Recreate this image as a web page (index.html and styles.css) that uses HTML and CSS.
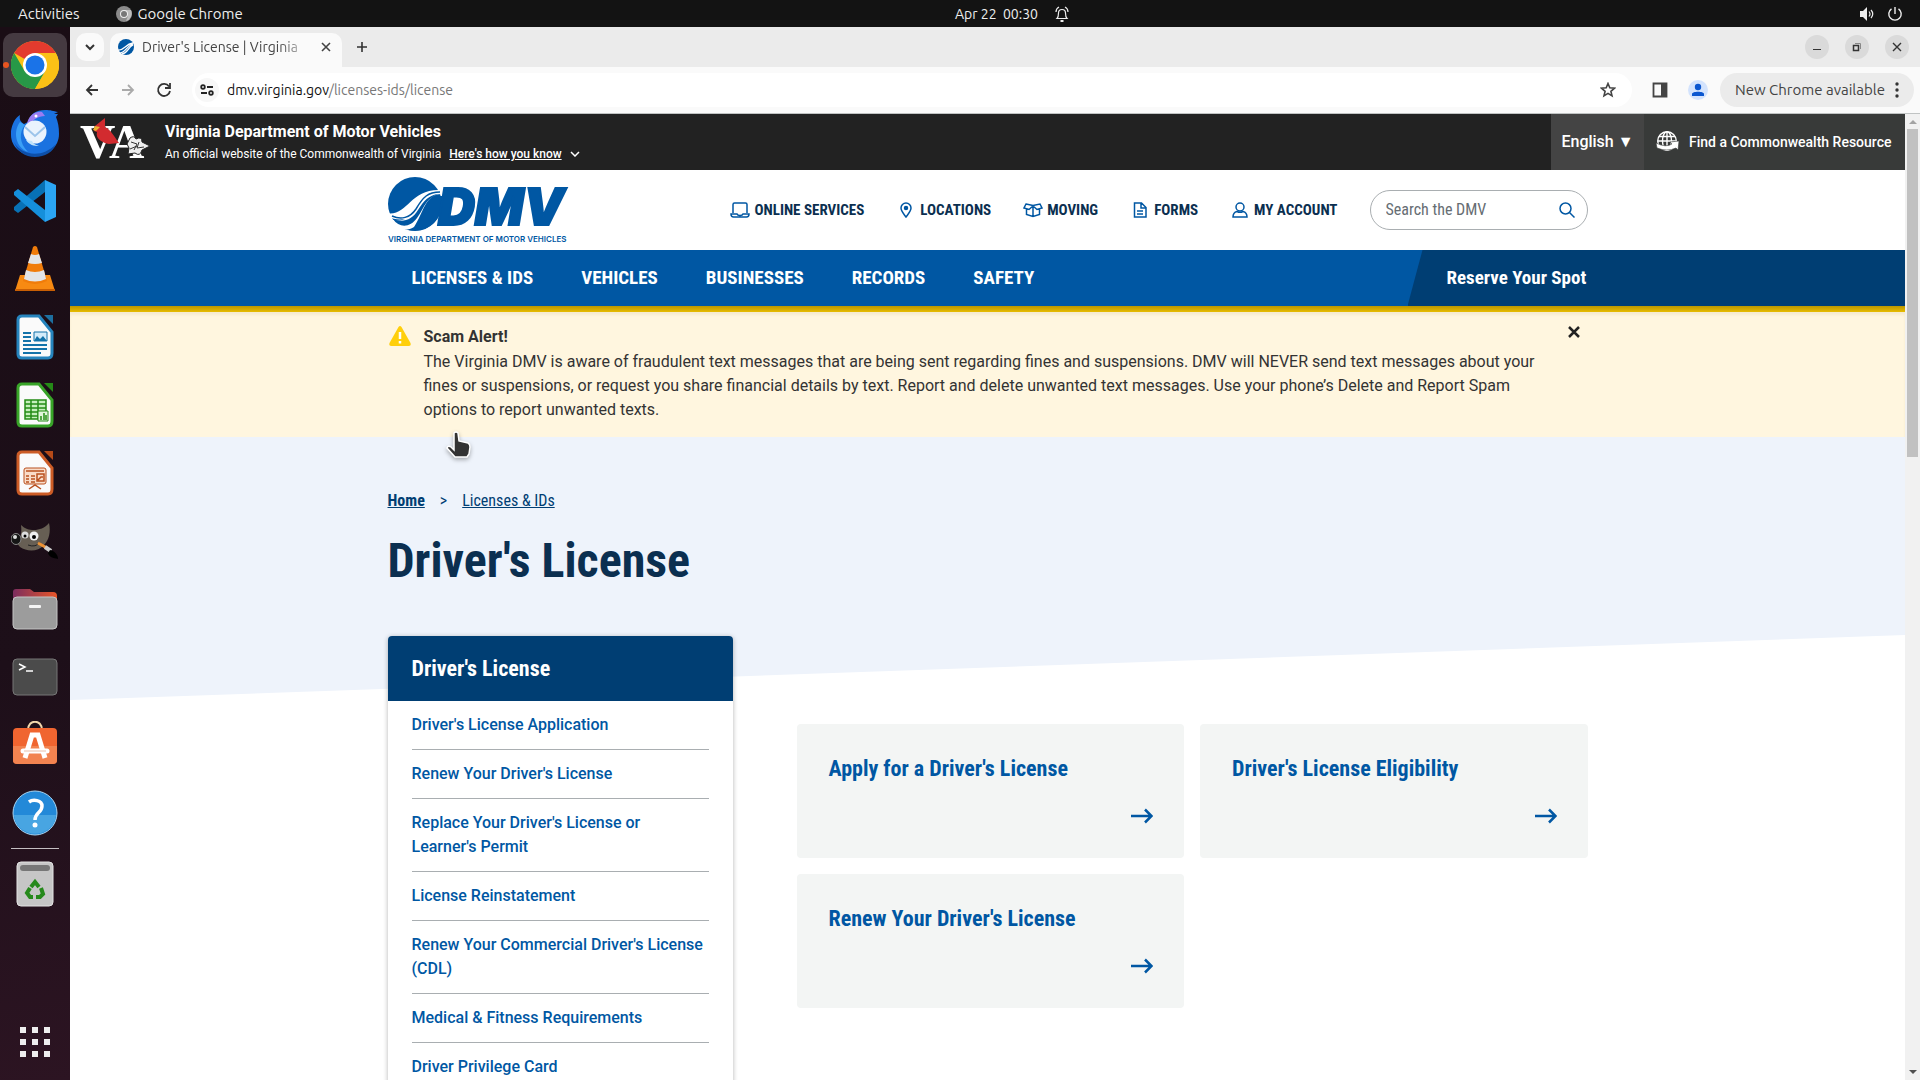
FILE: index.html
```html
<!DOCTYPE html>
<html lang="en">
<head>
<meta charset="utf-8">
<title>Driver's License | Virginia Department of Motor Vehicles</title>
<link rel="stylesheet" href="styles.css">
</head>
<body>
<div class="topbar">
  <div class="topbar-left">
    <button class="plain">Activities</button>
    <button class="plain app-menu">
      <svg width="16" height="16" viewBox="0 0 16 16"><circle cx="8" cy="8" r="8" fill="#8b8b8b"/><path d="M8 4h7a8 8 0 0 1-5 11l2-5z" fill="#bdbdbd"/><circle cx="8" cy="8" r="4" fill="#eee"/><circle cx="8" cy="8" r="3" fill="#777"/></svg>
      Google Chrome
    </button>
  </div>
  <button class="plain clock">Apr 22&nbsp; 00:30
    <svg width="14" height="16" viewBox="0 0 14 16" fill="none" stroke="#eee" stroke-width="1.2"><path d="M2 12.5c1.500-1.500 1.500-3 1.500-5.500a3.500 3.500 0 0 1 7 0c0 2.500 0 4 1.500 5.500z"/><path d="M1 6c0-2 1-4 3-5M13 6c0-2-1-4-3-5"/><path d="M5.500 15h3" stroke-width="2"/></svg>
  </button>
  <div class="topbar-right">
    <svg width="16" height="16" viewBox="0 0 16 16"><path d="M1 5h3l4-4v14l-4-4H1z" fill="#eee"/><path d="M10 5.500q2 2.500 0 5M12 4q3.500 4 0 8" stroke="#eee" fill="none" stroke-width="1.200"/></svg>
    <svg width="16" height="16" viewBox="0 0 16 16" fill="none" stroke="#eee" stroke-width="1.400"><path d="M8 1v7M4.500 2.800a6.200 6.200 0 1 0 7 0"/></svg>
  </div>
</div>

<div class="desktop">
  <nav class="dock" aria-label="Dock">
    <button class="dock-item active" aria-label="Google Chrome"><svg width="48" height="48" viewBox="0 0 48 48"><circle cx="24" cy="24" r="24" fill="#fbc116"/><path d="M24 24 3.200 12A24 24 0 0 1 44.800 12z" fill="#e33b2e"/><path d="M3.200 12 13.600 30 24 36 24 48A24 24 0 0 1 3.200 12z" fill="#279847"/><path d="M13.600 30 24 36 34.400 30 24 48A24 24 0 0 1 12 44.800z" fill="#279847"/><path d="M34.400 30 24 48A24 24 0 0 0 44.800 12H24z" fill="#fbc116"/><circle cx="24" cy="24" r="12" fill="#fff"/><circle cx="24" cy="24" r="9.500" fill="#1a73e8"/></svg></button>
    <button class="dock-item" aria-label="Thunderbird"><svg width="48" height="48" viewBox="0 0 48 48"><path d="M0 22C1 15 4 9 9 6c-1 5 1 7 4 9L17 13C19 5 25 1 34 1c6 0 8 1 13 2l-4 2h4l-2 3c2 5 3 10 3 17 0 13-11 22-24 22S0 38 0 26z" fill="#1a72e0"/><path d="M16 14C19 5 25 2 31 3l3 4c-7 0-12 4-15 8z" fill="#9a7cf2"/><path d="M9 13c-7 9-5 25 8 30-9-9-9-20-3-27z" fill="#3aa0f6"/><path d="M3 33c6 12 27 18 42 2-3 8-11 13-21 13S6 42 3 33z" fill="#0e4fa8"/><circle cx="24" cy="23" r="11.500" fill="#eaf3fd"/><path d="m14 18 10 9 10-9" fill="none" stroke="#9cc4ea" stroke-width="2"/><path d="M15 31c3 5 8 6 13 6-3-1-6-2-7-5z" fill="#bfe3fb"/><circle cx="25" cy="7" r="1.500" fill="#fff"/></svg></button>
    <button class="dock-item" aria-label="Visual Studio Code"><svg width="44" height="44" viewBox="0 0 44 44"><path d="m1 31 4 3 27-21V1L1 28z" fill="#0871b5"/><path d="m1 13 4-3 27 21v12L1 16z" fill="#158fdb"/><path d="m32 1 11 5v32l-11 5z" fill="#2ba5f3"/></svg></button>
    <button class="dock-item" aria-label="VLC"><svg width="42" height="48" viewBox="0 0 42 48"><path d="M6 30h30l5 16H1z" fill="#f78a12"/><path d="M1 44h40v2H1z" fill="#c95f04"/><path d="M19 2q2-2 4 0l10 34q-12 6-24 0z" fill="#f07c0a"/><path d="m17 9-3 9q7 2 14 0l-3-9q-4 2-8 0zM12 25l-2 9q11 5 22 0l-2-9q-9 4-18 0z" fill="#e3e5e7"/></svg></button>
    <button class="dock-item" aria-label="LibreOffice Writer"><svg width="38" height="46" viewBox="0 0 38 46"><path d="M6 2h17l13 16v21q0 5-4 5H6q-4 0-4-4V6q0-4 4-4z" fill="#fafafa" stroke="#2684bd" stroke-width="3"/><path d="M28 1h9v9z" fill="#1d6f9f"/><path d="M7 19h8M7 23h8M7 27h8M7 31h24M7 35h24M7 39h18" stroke="#1473aa" stroke-width="2"/><path d="M18 18h13v9H18z" fill="#d5ecfa" stroke="#1473aa"/><path d="m18 27 3-5 3 3 3-3 4 5z" fill="#1473aa"/></svg></button>
    <button class="dock-item" aria-label="LibreOffice Calc"><svg width="38" height="46" viewBox="0 0 38 46"><path d="M6 2h17l13 16v21q0 5-4 5H6q-4 0-4-4V6q0-4 4-4z" fill="#fafafa" stroke="#38a428" stroke-width="3"/><path d="M28 1h9v9z" fill="#258a17"/><path d="M9 18h21v19H9zM9 22h21M9 26h21M9 30h21M9 34h21M15 18v19M22 18v19" fill="#c5efbc" stroke="#248c16" stroke-width="1.500"/><path d="M22 29h10v10H22z" fill="#e0f5db" stroke="#248c16"/><path d="M25 38v-4M28 38v-7M30 38v-5" stroke="#248c16" stroke-width="1.500"/></svg></button>
    <button class="dock-item" aria-label="LibreOffice Impress"><svg width="38" height="46" viewBox="0 0 38 46"><path d="M6 2h17l13 16v21q0 5-4 5H6q-4 0-4-4V6q0-4 4-4z" fill="#fafafa" stroke="#cc5c26" stroke-width="3"/><path d="M28 1h9v9z" fill="#b54a18"/><rect x="8" y="18" width="22" height="16" rx="2" fill="#f9dcc8" stroke="#b9501e"/><path d="M10 21h18M10 26h3m2 0h4M10 29h3m2 0h4M10 32h3m2 0h4" stroke="#b9501e" stroke-width="1.500"/><path d="M21 24h7v7h-7zM22 30l3-3 2 0M13 39l6-4 6 4" fill="none" stroke="#b9501e" stroke-width="1.500"/></svg></button>
    <button class="dock-item" aria-label="GIMP"><svg width="48" height="40" viewBox="0 0 48 40"><path d="M10 4c4 4 8 5 13 5s11-2 15-7c2 9 0 17-5 22-6 7-17 7-24 2L4 20c6 0 7-8 6-16z" fill="#675f54"/><circle cx="14" cy="14" r="3.500" fill="#ddd"/><circle cx="23" cy="15" r="4.500" fill="#eee"/><circle cx="14" cy="15" r="1.500"/><circle cx="23" cy="16" r="2"/><ellipse cx="5" cy="18" rx="5" ry="5.500" fill="#151515" stroke="#888"/><ellipse cx="4" cy="16" rx="2" ry="2" fill="#ddd"/><path d="M17 24q8 3 12-3" fill="none" stroke="#222"/><path d="m27 22 9 5" stroke="#ed9234" stroke-width="3"/><path d="m34 26 6 4" stroke="#ccc" stroke-width="4"/><path d="m39 29c5 1 8 5 8 9-5-1-9-2-10-6z" fill="#000"/></svg></button>
    <button class="dock-item" aria-label="Files"><svg width="46" height="42" viewBox="0 0 46 42"><defs><linearGradient id="fg"><stop stop-color="#7b2d5e"/><stop offset="1" stop-color="#e8562a"/></linearGradient></defs><path d="M1 12V4q0-3 3-3h14l4 3h19q4 0 4 4v9z" fill="url(#fg)"/><rect x="1" y="9" width="44" height="32" rx="4" fill="#9c9c9c" stroke="#c4c4c4"/><rect x="17" y="17" width="12" height="3" rx="1" fill="#f4f4f4"/></svg></button>
    <button class="dock-item" aria-label="Terminal"><svg width="46" height="38" viewBox="0 0 46 38"><rect x="1" y="1" width="44" height="36" rx="4" fill="#4b4b4b" stroke="#777"/><path d="m7 6 6 3-6 3M14 13h7" fill="none" stroke="#fff" stroke-width="1.500"/></svg></button>
    <button class="dock-item" aria-label="Ubuntu Software"><svg width="46" height="48" viewBox="0 0 46 48"><path d="M16 9c0-11 14-11 14 0" fill="none" stroke="#f2d7ac" stroke-width="2"/><rect x="1" y="7" width="44" height="36" rx="4" fill="#f06530"/><path d="M1 25h44v14q0 4-4 4H5q-4 0-4-4z" fill="#f28350"/><path d="M13 37 20 14h6l7 23" fill="none" stroke="#fff" stroke-width="5"/><path d="M11 30h24" stroke="#fff" stroke-width="5" stroke-linecap="round"/><path d="M12 30h22" stroke="#e9bfa9" stroke-width="1"/></svg></button>
    <button class="dock-item" aria-label="Help"><svg width="46" height="46" viewBox="0 0 46 46"><circle cx="23" cy="23" r="22" fill="#2389d8" stroke="#a7d6f4"/><path d="M2 25h42c-2 25-40 25-42 0z" fill="#48a5e2"/><path d="M17 12c4-3 13-2 13 4 0 7-7 6-7 14" fill="none" stroke="#fff" stroke-width="3.500"/><circle cx="23" cy="35" r="2.500" fill="#fff"/></svg></button>
    <hr class="dock-line">
    <button class="dock-item" aria-label="Trash"><svg width="38" height="46" viewBox="0 0 38 46"><rect x="1" y="1" width="36" height="44" rx="4" fill="#c6c6c6" stroke="#e4e4e4"/><rect x="4" y="4" width="30" height="6" rx="3" fill="#777"/><g fill="none" stroke="#26891b" stroke-width="4"><path d="m15 26 4-5 4 5M25 27l2 6-3 3h-4M17 36h-3l-3-4 3-5"/></g></svg></button>
    <button class="dock-item apps" aria-label="Show Applications"><svg width="30" height="30" viewBox="0 0 30 30"><path d="M3 0v30M15 0v30M27 0v30" stroke="#eee" stroke-width="6" stroke-dasharray="6 6"/></svg></button>
  </nav>

  <div class="browser">
    <div class="tabstrip">
      <button class="tab-search" aria-label="Search tabs"><svg width="10" height="10" viewBox="0 0 10 10" fill="none" stroke="#333" stroke-width="2"><path d="m1 3 4 4 4-4"/></svg></button>
      <div class="tab">
        <svg width="16" height="16" viewBox="0 0 16 16"><circle cx="8" cy="8" r="8" fill="#0057a3"/><path d="M0 11c6 1 7-6 15-7M1 14c7 0 7-7 14-9M4 15c6-1 6-7 11-9" stroke="#fff" fill="none" stroke-width="1.300"/></svg>
        <span class="tab-title">Driver's License | Virginia</span>
        <button class="plain" aria-label="Close tab"><svg width="10" height="10" viewBox="0 0 10 10" stroke="#444" stroke-width="1.600"><path d="m1 1 8 8M9 1 1 9"/></svg></button>
      </div>
      <button class="plain new-tab" aria-label="New tab"><svg width="12" height="12" viewBox="0 0 12 12" stroke="#333" stroke-width="1.600"><path d="M6 1v10M1 6h10"/></svg></button>
      <div class="win-buttons">
        <button aria-label="Minimize"><svg width="10" height="10" viewBox="0 0 10 10" stroke="#333"><path d="M1 7.500h8"/></svg></button>
        <button aria-label="Restore"><svg width="10" height="10" viewBox="0 0 10 10" stroke="#333" fill="none"><path d="M1.500 3.500h5v5h-5z" stroke-width="1.500"/><path d="M3 1.500h5.500V7" stroke="#888"/></svg></button>
        <button aria-label="Close"><svg width="10" height="10" viewBox="0 0 10 10" stroke="#333" stroke-width="1.400"><path d="m1 1 8 8M9 1 1 9"/></svg></button>
      </div>
    </div>
    <div class="toolbar">
      <button class="plain" aria-label="Back"><svg width="16" height="16" viewBox="0 0 16 16" fill="none" stroke="#333" stroke-width="1.800"><path d="M14 8H3M8 3 3 8l5 5"/></svg></button>
      <button class="plain" aria-label="Forward"><svg width="16" height="16" viewBox="0 0 16 16" fill="none" stroke="#aaa" stroke-width="1.800"><path d="M2 8h11M8 3l5 5-5 5"/></svg></button>
      <button class="plain" aria-label="Reload"><svg width="16" height="16" viewBox="0 0 16 16" fill="none" stroke="#333" stroke-width="1.800"><path d="M13 4.500A6 6 0 1 0 14 9M14 1v5H9"/></svg></button>
      <div class="omnibox">
        <span class="site-info"><svg width="14" height="12" viewBox="0 0 14 12" fill="none" stroke="#222" stroke-width="1.800"><circle cx="3" cy="3" r="1.800"/><path d="M7 3h6M1 9h6"/><circle cx="11" cy="9" r="1.800"/></svg></span>
        <span class="url"><span class="host">dmv.virginia.gov</span>/licenses-ids/license</span>
        <button class="plain" aria-label="Bookmark this tab"><svg width="16" height="16" viewBox="0 0 16 16" fill="none" stroke="#444" stroke-width="1.600"><path d="m8 1.500 1.800 4.300 4.700.4-3.600 3.100 1.100 4.600L8 11.400l-4 2.500 1.100-4.600L1.500 6.200l4.700-.4z"/></svg></button>
      </div>
      <button class="plain" aria-label="Side panel"><svg width="16" height="16" viewBox="0 0 16 16"><path d="M1.500 1.500h13v13h-13z" fill="none" stroke="#444" stroke-width="1.800"/><path d="M9 1h6v14H9z" fill="#444"/></svg></button>
      <button class="avatar" aria-label="Profile"><svg width="14" height="14" viewBox="0 0 14 14" fill="#0b57d0"><circle cx="7" cy="4" r="3.200"/><path d="M1 13v-2c0-3 12-3 12 0v2z"/></svg></button>
      <button class="update">New Chrome available <svg width="4" height="16" viewBox="0 0 4 16" fill="#333"><circle cx="2" cy="2" r="1.700"/><circle cx="2" cy="8" r="1.700"/><circle cx="2" cy="14" r="1.700"/></svg></button>
    </div>

    <div class="viewport">
      <div class="page">
        <div class="gov">
          <svg class="va" width="72" height="44" viewBox="0 0 72 44" aria-label="VA"><text class="va-text" x="0" y="38">VA</text><path d="m15 6 10-8v9c6 3 8 8 14 16l-10 1c-6-1-14-5-12-12l-3-1z" fill="#d22b2f"/><path d="m15 6 5 1-4 4-3-1z" fill="#eeb22f"/><path d="M50 18q4-3 6 1 6-3 6 3l8 4-8 4q-2 7-7 3l-7 1 1-6-2-4z" fill="#eee" stroke="#222"/><path d="m51 22 6 2-3 6M59 22l-2 6 7-1M50 29l7-3" stroke="#333" fill="none"/></svg>
          <div class="gov-text">
            <strong>Virginia Department of Motor Vehicles</strong>
            <div class="gov-sub">An official website of the Commonwealth of Virginia <a href="#know">Here's how you know</a> <svg width="10" height="6" viewBox="0 0 10 6" fill="none" stroke="#fff" stroke-width="1.500"><path d="m1 1 4 4 4-4"/></svg></div>
          </div>
          <button class="lang">English ▼</button>
          <a class="find" href="#find"><svg width="24" height="22" viewBox="0 0 24 22" fill="none" stroke="#fff" stroke-width="1.400"><circle cx="11" cy="10" r="9.300"/><ellipse cx="11" cy="10" rx="4.500" ry="9.300"/><path d="M2 10h18M3 5.500h16M11 1v14"/><path d="M0 12q10 5 16 1l-2-2 9-1-1 9-2-2q-9 4-19 0z" fill="#fff" stroke="#383a39" stroke-width=".6"/></svg>Find a Commonwealth Resource</a>
        </div>

        <header class="site-header container">
          <a class="logo" href="#home"><svg width="190" height="70" viewBox="0 0 190 70" aria-label="DMV">
            <circle cx="27" cy="29" r="27" fill="#0057a3"/>
            <path d="M-2 38c22 4 23-24 54-23l2 4c-17 0-18 18-28 33C18 58 7 52 3 44c4 2 9 2 14 0-7 1-13 0-19-3z" fill="#fff"/>
            <path d="M4 41c9 4 18 2 24-7 7-12 12-17 24-17" fill="none" stroke="#0057a3" stroke-width="1.500"/>
            <path d="M5 44c10 4 19 1 25-9 6-9 10-15 21-16-14 4-15 15-22 24-7 10-18 10-24 1z" fill="#0057a3"/>
            <path d="M21 55c13-3 14-19 20-27 4-5 8-7 13-7 3 18-10 38-33 34z" fill="#0057a3"/>
            <text class="dmv-text" x="50" y="50">DMV</text><text class="dmv-sub" x="0" y="67">VIRGINIA DEPARTMENT OF MOTOR VEHICLES</text></svg></a>
          <nav class="utility" aria-label="Utility">
            <a href="#online"><svg width="20" height="16" viewBox="0 0 20 16"><path d="M3 11V2.500Q3 1 4.500 1h11Q17 1 17 2.500V11M1 12h6q.5 1.500 3 1.500t3-1.500h6q0 3-2.500 3h-13Q1 15 1 12z"/></svg>ONLINE SERVICES</a>
            <a href="#locations"><svg width="20" height="16" viewBox="0 0 20 16"><path d="M10 15C7 11 5 9 5 6a5 5 0 0 1 10 0c0 3-2 5-5 9z"/><circle cx="10" cy="6" r="1.500" fill="#0057a3"/></svg>LOCATIONS</a>
            <a href="#moving"><svg width="20" height="16" viewBox="0 0 20 16"><path d="m3 2 7 1.500L17 2l2 4-5 1.500L10 4 6 7.500 1 6zM3.500 7v5.500L10 14.500l6.500-2V7M10 4v10"/></svg>MOVING</a>
            <a href="#forms"><svg width="20" height="16" viewBox="0 0 20 16"><path d="M4.500 1h7L16 5.500V15H4.500zM11 1v5h5M7 9h6M7 12h6"/></svg>FORMS</a>
            <a href="#account"><svg width="20" height="16" viewBox="0 0 20 16"><circle cx="10" cy="5" r="4"/><path d="M7 9.500q-4 1-4 5.500h14q0-4.500-4-5.500-3 1.500-6 0z"/></svg>MY ACCOUNT</a>
          </nav>
          <form class="search"><input type="text" placeholder="Search the DMV" aria-label="Search the DMV"><button class="plain" type="button" aria-label="Search"><svg width="16" height="16" viewBox="0 0 16 16" fill="none" stroke="#0057a3" stroke-width="1.500"><circle cx="6.500" cy="6.500" r="5.500"/><path d="m10.500 10.500 5 5"/></svg></button></form>
        </header>

        <nav class="main-nav" aria-label="Main">
          <div class="menu"><a href="#licenses">LICENSES &amp; IDS</a><a href="#vehicles">VEHICLES</a><a href="#businesses">BUSINESSES</a><a href="#records">RECORDS</a><a href="#safety">SAFETY</a></div>
          <a class="reserve" href="#reserve">Reserve Your Spot</a>
        </nav>

        <section class="alert">
          <div class="container alert-inner">
            <svg width="24" height="24" viewBox="0 0 24 24"><path d="M10.500 2q1.500-2 3 0l9 16q1 3-2 3h-17q-3 0-2-3z" fill="#ffcf0b"/><path d="M12 7v7M12 16v2.500" stroke="#fff" stroke-width="2.500"/></svg>
            <div class="alert-text"><strong>Scam Alert!</strong><p>The Virginia DMV is aware of fraudulent text messages that are being sent regarding fines and suspensions. DMV will NEVER send text messages about your fines or suspensions, or request you share financial details by text. Report and delete unwanted text messages. Use your phone’s Delete and Report Spam options to report unwanted texts.</p></div>
            <button class="plain" aria-label="Dismiss alert"><svg width="12" height="12" viewBox="0 0 12 12" stroke="#222" stroke-width="2.500"><path d="m1 1 10 10M11 1 1 11"/></svg></button>
          </div>
        </section>

        <main class="content">
          <div class="container">
            <nav class="crumbs" aria-label="Breadcrumb"><a href="#home"><b>Home</b></a><span>&gt;</span><a href="#licenses">Licenses &amp; IDs</a></nav>
            <h1>Driver's License</h1>
            <div class="columns">
              <aside class="sidebar">
                <h2>Driver's License</h2>
                <ul>
                  <li><a href="#s1">Driver's License Application</a></li>
                  <li><a href="#s2">Renew Your Driver's License</a></li>
                  <li><a href="#s3">Replace Your Driver's License or Learner's Permit</a></li>
                  <li><a href="#s4">License Reinstatement</a></li>
                  <li><a href="#s5">Renew Your Commercial Driver's License (CDL)</a></li>
                  <li><a href="#s6">Medical &amp; Fitness Requirements</a></li>
                  <li><a href="#s7">Driver Privilege Card</a></li>
                </ul>
              </aside>
              <div class="cards">
                <a class="card" href="#c1">Apply for a Driver's License<svg width="22" height="24" viewBox="0 0 22 24"><path d="M0 12h20M14 5.500l6.500 6.500-6.500 6.500"/></svg></a>
                <a class="card" href="#c2">Driver's License Eligibility<svg width="22" height="24" viewBox="0 0 22 24"><path d="M0 12h20M14 5.500l6.500 6.500-6.500 6.500"/></svg></a>
                <a class="card" href="#c3">Renew Your Driver's License<svg width="22" height="24" viewBox="0 0 22 24"><path d="M0 12h20M14 5.500l6.500 6.500-6.500 6.500"/></svg></a>
              </div>
            </div>
          </div>
        </main>
      </div>
      <div class="scrollbar">
        <svg width="15" height="15" viewBox="0 0 15 15"><path d="m4 10 4-4 4 4z" fill="#a3a3a3"/></svg>
        <div class="thumb"></div>
        <svg class="down" width="15" height="15" viewBox="0 0 15 15"><path d="m4 5 4 4 4-4z" fill="#505050"/></svg>
      </div>
    </div>
  </div>
</div>
<svg class="cursor" width="26" height="28" viewBox="0 0 26 28"><path d="M8 2q2-2 4 0l1 8 9 2q2 1 2 4l-1 7-2 3H9l-8-9q1-3 4-1l3 3z" fill="#333" stroke="#fff" stroke-width="1.500"/></svg>
</body>
</html>
```
FILE: styles.css
```css
* { box-sizing: border-box; }
body { margin: 0; height: 100vh; display: flex; flex-direction: column; overflow: hidden; background: #fff; font: 16px/24px Roboto, sans-serif; color: #333; }
svg { display: block; flex: none; }
button { font: inherit; color: inherit; border: 0; padding: 0; margin: 0; }
.plain { background: none; display: flex; align-items: center; }
a { color: inherit; text-decoration: none; }

.topbar { height: 27px; flex: none; background: #131313; color: #eee; font: 14px/26px Ubuntu, "Noto Sans", sans-serif; display: grid; grid-template-columns: 1fr auto 1fr; align-items: center; }
.topbar-left { display: flex; gap: 36px; padding-left: 18px; font-size: 15px; }
.app-menu { gap: 6px; }
.clock { gap: 17px; padding-left: 104px; }
.topbar-right { display: flex; gap: 12px; justify-content: flex-end; padding-right: 17px; }

.desktop { flex: 1; display: flex; min-height: 0; }
.dock { width: 70px; flex: none; display: flex; flex-direction: column; align-items: center; gap: 4px; padding: 6px 0; background: linear-gradient(170deg, #1a0d15, #1d0f19 60%, #2c1422); }
.dock-item { width: 64px; height: 64px; flex: none; border-radius: 10px; display: flex; align-items: center; justify-content: center; background: none; }
.dock-item.active { background: #453a41; position: relative; }
.dock-item.active::before { content: ""; position: absolute; left: 0; top: 29px; width: 6px; height: 6px; border-radius: 3px; background: #e95420; }
.dock-line { width: 48px; height: 1px; border: 0; margin: -1px 0; background: #c4bfc2; flex: none; }
.apps { margin-top: auto; }

.browser { flex: 1; min-width: 0; display: flex; flex-direction: column; }
.tabstrip { height: 40px; flex: none; background: #ebebeb; display: flex; align-items: center; padding: 0 11px 0 6px; font: 14px/20px Ubuntu, "Noto Sans", sans-serif; }
.tab-search { width: 28px; height: 28px; border-radius: 10px; background: #fafafa; display: flex; align-items: center; justify-content: center; }
.tab { width: 232px; height: 34px; margin: 6px 0 0 6px; padding: 0 11px 6px 8px; border-radius: 10px 10px 0 0; background: #fafafa; display: flex; align-items: center; gap: 8px; }
.tab-title { flex: 1; white-space: nowrap; color: #444; -webkit-mask-image: linear-gradient(90deg, #000 80%, transparent); mask-image: linear-gradient(90deg, #000 80%, transparent); }
.new-tab { margin-left: 14px; }
.win-buttons { margin-left: auto; display: flex; gap: 16px; }
.win-buttons button { width: 24px; height: 24px; border-radius: 12px; background: #dadada; display: flex; align-items: center; justify-content: center; }
.toolbar { height: 47px; flex: none; background: #fafafa; border-bottom: 1px solid #c0c3c3; display: flex; align-items: center; gap: 20px; padding: 0 6px 0 14px; }
.omnibox { flex: 1; height: 34px; border-radius: 17px; background: #fff; display: flex; align-items: center; gap: 8px; padding: 0 16px 0 3px; }
.site-info { width: 24px; height: 24px; border-radius: 12px; background: #f7f7f7; display: flex; align-items: center; justify-content: center; }
.url { flex: 1; font: 14px/20px Ubuntu, "Noto Sans", sans-serif; color: #777; }
.host { color: #111; }
.avatar { width: 20px; height: 20px; border-radius: 10px; background: #d3e3fd; display: flex; align-items: center; justify-content: center; }
.update { height: 34px; border-radius: 17px; background: #ebebeb; padding: 0 15px; display: flex; align-items: center; gap: 10px; font: 15px/20px Ubuntu, "Noto Sans", sans-serif; color: #444; margin-left: -8px; }

.viewport { flex: 1; min-height: 0; display: flex; }
.page { flex: 1; min-width: 0; overflow: hidden; background: #fff; }
.scrollbar { width: 15px; flex: none; background: #f1f1f1; display: flex; flex-direction: column; }
.thumb { height: 34%; margin: 0 2px; background: #c1c1c1; }
.down { margin-top: auto; }
.container { width: 100%; max-width: 1200px; margin: 0 auto; }

.gov { height: 56px; display: flex; align-items: center; background: #222; color: #fff; padding-left: 10px; }
.va { overflow: visible; }
.va-text { font: 700 49px "Liberation Serif", serif; fill: #fff; }
.gov-text { margin-left: 13px; padding-top: 2px; flex: 1; line-height: 22px; }
.gov-text strong { display: block; }
.gov-sub { font-size: 12px; display: flex; align-items: center; gap: 8px; }
.gov-sub a { font-weight: 500; text-decoration: underline; }
.lang { width: 93px; align-self: stretch; background: #444; font-weight: 500; font-size: 16px; white-space: nowrap; }
.find { width: 261px; align-self: stretch; display: flex; align-items: center; gap: 9px; padding-left: 12px; background: #383a39; font-weight: 500; font-size: 14px; white-space: nowrap; }

.site-header { height: 80px; display: flex; align-items: center; }
.logo { margin-right: auto; }
.dmv-text { font: italic 900 51px Inter, sans-serif; fill: #0057a3; stroke: #0057a3; stroke-width: 2; }
.dmv-sub { font: 600 8px Inter, sans-serif; fill: #0057a3; }
.utility { display: flex; gap: 32px; font: 700 15px/24px "Roboto Condensed", Roboto, sans-serif; color: #0b2f50; }
.utility a { display: flex; align-items: center; gap: 4px; }
.utility svg { fill: none; stroke: #0057a3; stroke-width: 1.5; }
.search { width: 218px; height: 40px; margin-left: 32px; border: 1px solid #a9aeb1; border-radius: 20px; display: flex; align-items: center; padding: 0 12px 0 15px; }
.search input { flex: 1; min-width: 0; border: 0; outline: 0; padding: 0; background: none; font: 16px/24px "Roboto Condensed", Roboto, sans-serif; }
.search input::placeholder { color: #666d73; opacity: 1; }

.main-nav { padding-bottom: 6px; display: grid; grid-template-columns: 1fr minmax(0, 1020px) 180px 1fr; background: linear-gradient(#b99600, #e8bc00) bottom / 100% 6px no-repeat, #0057a3; color: #fff; font: 700 19px/56px "Roboto Condensed", Roboto, sans-serif; }
.menu { grid-column: 2; display: flex; gap: 48px; padding-left: 24px; }
.reserve { grid-column: 3 / 5; padding-left: 39px; background: #003e73; clip-path: polygon(15px 0, 100% 0, 100% 100%, 0 100%); }

.alert { background: #fff6df; padding: 13px 0 15px; box-shadow: inset 0 3px 3px #f6ebd0; }
.alert-inner { display: flex; align-items: flex-start; gap: 12px; }
.alert-text { flex: 1; padding-right: 8px; }
.alert-text strong { display: block; font-weight: 700; }
.alert-text p { margin: 1px 0 0; }
.alert .plain { margin: 1px 8px; }

.content { position: relative; }
.content::before { content: ""; position: absolute; left: 0; right: 0; top: 0; height: 263px; background: #eef3fb; clip-path: polygon(0 0, 100% 0, 100% 198px, 0 100%); }
.content > .container { position: relative; padding-top: 52px; }
.crumbs { display: flex; gap: 15px; font: 16px/24px "Roboto Condensed", Roboto, sans-serif; color: #003e73; }
.crumbs a { text-decoration: underline; }
h1 { margin: 18px 0 45px; font: 700 48px/60px "Roboto Condensed", Roboto, sans-serif; color: #0b2f50; }
.columns { display: grid; grid-template-columns: 345px 1fr; gap: 64px; align-items: start; }
.sidebar { background: #fff; border-radius: 4px 4px 0 0; box-shadow: 0 1px 5px rgba(0, 0, 0, .3); }
.sidebar h2 { margin: 0; padding: 0 24px; border-radius: 4px 4px 0 0; background: #003e73; color: #fff; font: 700 22px/65px "Roboto Condensed", Roboto, sans-serif; }
.sidebar ul { list-style: none; margin: 0; padding: 0 24px; }
.sidebar li { padding: 12px 0; border-bottom: 1px solid #a9aeb1; font-weight: 500; color: #0057a3; }
.cards { display: grid; grid-template-columns: 1fr 1fr; gap: 16px; padding-top: 88px; }
.card { display: flex; flex-direction: column; gap: 21px; padding: 31px 31px 30px 32px; border-radius: 4px; background: #f3f5f4; color: #0057a3; font: 700 22px/28px "Roboto Condensed", Roboto, sans-serif; }
.card svg { align-self: flex-end; fill: none; stroke: #0057a3; stroke-width: 2.5; }

.cursor { position: absolute; left: 446px; top: 431px; filter: drop-shadow(0 2px 2px rgba(0, 0, 0, .3)); }
```
